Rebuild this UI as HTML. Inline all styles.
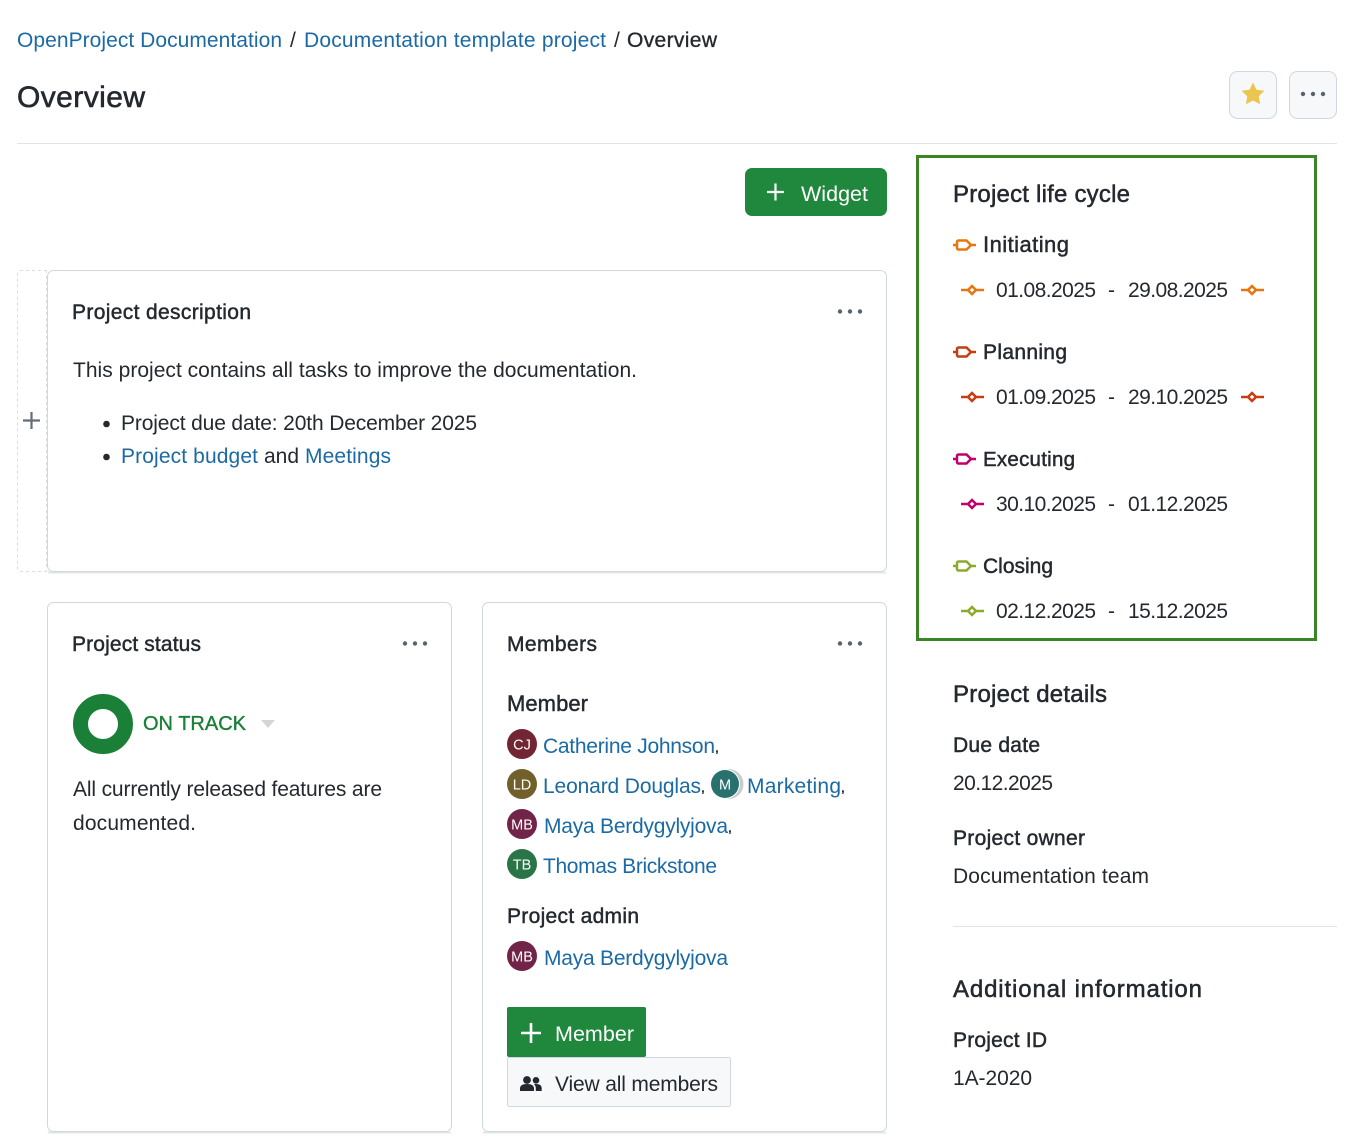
<!DOCTYPE html>
<html><head><meta charset="utf-8"><title>Overview</title>
<style>
html,body{margin:0;padding:0;background:#fff}
svg{display:block}
text{font-family:"Liberation Sans",sans-serif;font-size:21px;fill:#24292f;white-space:pre}
.l{fill:#1b6aa5}
.b{stroke:#24292f;stroke-width:.45px}
.h{font-size:24px;stroke:#24292f;stroke-width:.5px}
.w{fill:#fff;font-size:21.5px}
.av{font-size:14.5px;fill:#fff;text-anchor:middle}
.ic{fill:none;stroke-width:2.5}
.c{font-size:14px;stroke:#24292f;stroke-width:.4px}
</style></head><body>
<svg width="1351" height="1138" viewBox="0 0 1351 1138" xmlns="http://www.w3.org/2000/svg">
<rect width="1351" height="1138" fill="#fff"/>
<!-- breadcrumb -->
<text class="l" x="17" y="47" textLength="265">OpenProject Documentation</text>
<text x="290" y="47">/</text>
<text class="l" x="304" y="47" textLength="302">Documentation template project</text>
<text x="614" y="47">/</text>
<text x="627" y="47" textLength="90" style="stroke:#24292f;stroke-width:.35px">Overview</text>
<text x="17" y="107" textLength="128" style="font-size:30px;stroke:#24292f;stroke-width:.6px">Overview</text>
<!-- header buttons -->
<rect x="1229.500" y="71.500" width="47" height="47" rx="8" fill="#f6f8fa" stroke="#d0d7de"/>
<path d="M1253 82.500l3.500 7.200 7.900 1.100-5.700 5.500 1.400 7.900-7.100-3.700-7.100 3.700 1.400-7.900-5.700-5.500 7.900-1.100z" fill="#eac54f"/>
<rect x="1289.500" y="71.500" width="47" height="47" rx="8" fill="#f6f8fa" stroke="#d0d7de"/>
<g fill="#59636e"><circle cx="1303" cy="94" r="2.200"/><circle cx="1313" cy="94" r="2.200"/><circle cx="1323" cy="94" r="2.200"/></g>
<line x1="17" y1="143.500" x2="1337" y2="143.500" stroke="#e1e5e9"/>
<!-- widget button -->
<rect x="745" y="168" width="142" height="48" rx="7" fill="#1f883d"/>
<path d="M775.500 183.500v17M767 192h17" stroke="#fff" stroke-width="2.200"/>
<text class="w" x="801" y="201" textLength="67">Widget</text>
<!-- dashed sidebar -->
<path d="M47 270.500H21a3.500 3.500 0 0 0-3.500 3.500v294a3.500 3.500 0 0 0 3.500 3.500h26M46.500 270v302" fill="none" stroke="#d8dde2" stroke-dasharray="3 3"/>
<path d="M31.500 412v17M23 420.500h17" stroke="#646d78" stroke-width="2.200"/>
<!-- cards -->
<path d="M48 572.500h838M48 1132.500h403M483 1132.500h403" stroke="#e3e6e9" stroke-width="2"/>
<rect x="47.500" y="270.500" width="839" height="301" rx="6" fill="#fff" stroke="#d0d7de"/>
<rect x="47.500" y="602.500" width="404" height="529" rx="6" fill="#fff" stroke="#d0d7de"/>
<rect x="482.500" y="602.500" width="404" height="529" rx="6" fill="#fff" stroke="#d0d7de"/>
<!-- description -->
<text class="b" x="72" y="319" textLength="179">Project description</text>
<g fill="#59636e"><circle cx="840" cy="311.500" r="2.200"/><circle cx="850" cy="311.500" r="2.200"/><circle cx="860" cy="311.500" r="2.200"/></g>
<text x="73" y="377" textLength="564">This project contains all tasks to improve the documentation.</text>
<circle cx="106.500" cy="424" r="3.300" fill="#24292f"/>
<circle cx="106.500" cy="457" r="3.300" fill="#24292f"/>
<text x="121" y="430" textLength="356">Project due date: 20th December 2025</text>
<text class="l" x="121" y="463" textLength="137">Project budget</text>
<text x="264" y="463" textLength="35">and</text>
<text class="l" x="305" y="463" textLength="86">Meetings</text>
<!-- status -->
<text class="b" x="72" y="651" textLength="129">Project status</text>
<g fill="#59636e"><circle cx="405" cy="643.500" r="2.200"/><circle cx="415" cy="643.500" r="2.200"/><circle cx="425" cy="643.500" r="2.200"/></g>
<circle cx="103" cy="724" r="22.500" fill="none" stroke="#1a7f37" stroke-width="15"/>
<text x="143" y="730" textLength="103" style="font-size:20px;fill:#1a7f37;stroke:#1a7f37;stroke-width:.35px">ON TRACK</text>
<path d="M261 720h14l-7 8z" fill="#d4d5d8"/>
<text x="73" y="796" textLength="309">All currently released features are</text>
<text x="73" y="830" textLength="123">documented.</text>
<!-- members -->
<text class="b" x="507" y="651" textLength="90">Members</text>
<g fill="#59636e"><circle cx="840" cy="643.500" r="2.200"/><circle cx="850" cy="643.500" r="2.200"/><circle cx="860" cy="643.500" r="2.200"/></g>
<text class="b" x="507" y="711" textLength="81" style="font-size:22px">Member</text>
<circle cx="522" cy="744" r="15" fill="#722533"/><text class="av" x="522" y="749.500">CJ</text>
<text class="l" x="543" y="753" textLength="172">Catherine Johnson</text><text class="c" x="715" y="752">,</text>
<circle cx="522" cy="784" r="15" fill="#71602a"/><text class="av" x="522" y="789.500">LD</text>
<text class="l" x="543" y="793" textLength="158">Leonard Douglas</text><text class="c" x="701" y="792">,</text>
<circle cx="728.500" cy="784" r="15" fill="#c9cbcc"/><circle cx="725" cy="784" r="15" fill="#fff"/><circle cx="725" cy="784" r="14" fill="#29716f"/><text class="av" x="725" y="789.500">M</text>
<text class="l" x="747" y="793" textLength="94">Marketing</text><text class="c" x="841" y="792">,</text>
<circle cx="522" cy="824" r="15" fill="#722448"/><text class="av" x="522" y="829.500">MB</text>
<text class="l" x="544" y="833" textLength="184">Maya Berdygylyjova</text><text class="c" x="728" y="832">,</text>
<circle cx="522" cy="864" r="15" fill="#2a7548"/><text class="av" x="522" y="869.500">TB</text>
<text class="l" x="543" y="873" textLength="174">Thomas Brickstone</text>
<text class="b" x="507" y="923" textLength="132">Project admin</text>
<circle cx="522" cy="956" r="15" fill="#722448"/><text class="av" x="522" y="961.500">MB</text>
<text class="l" x="544" y="965" textLength="184">Maya Berdygylyjova</text>
<rect x="507" y="1007" width="139" height="50" rx="2" fill="#1f883d"/>
<path d="M531 1023v20M521 1033h20" stroke="#fff" stroke-width="2.600"/>
<text class="w" x="555" y="1041" textLength="79">Member</text>
<rect x="507.500" y="1057.500" width="223" height="49" rx="2" fill="#f6f8fa" stroke="#d0d7de"/>
<circle cx="527" cy="1080" r="3.900" fill="#24292f"/>
<circle cx="536" cy="1080.300" r="3.300" fill="#24292f"/>
<path d="M520 1091v-2.500c0-3 2.500-4.500 7-4.500s7 1.500 7 4.500v2.500z" fill="#24292f"/>
<path d="M535.800 1091v-2.800c0-1.800-.7-3.200-2-4.100 .7-.1 1.400-.1 2.200-.1 3.600 0 5.700 1.400 5.700 4.200v2.800z" fill="#24292f"/>
<text x="555" y="1091" textLength="163">View all members</text>
<!-- life cycle -->
<rect x="917.500" y="156.500" width="398" height="483" fill="none" stroke="#3b8526" stroke-width="3"/>
<text class="h" x="953" y="202" textLength="177">Project life cycle</text>

<g stroke="#e8760f" class="ic"><path d="M953 245h4M971 245h5M958.500 240.500h8l4.500 4.500-4.500 4.500h-8a1.500 1.500 0 0 1-1.500-1.500v-6a1.500 1.500 0 0 1 1.500-1.500z"/><path d="M961 290h7M976 290h8M972 286l4 4-4 4-4-4z"/><path d="M1241 290h7M1256 290h8M1252 286l4 4-4 4-4-4z"/></g>
<text class="b" x="983" y="252" textLength="86" style="font-size:22px">Initiating</text>
<text x="996" y="297" textLength="100">01.08.2025</text><text x="1108" y="297">-</text><text x="1128" y="297" textLength="100">29.08.2025</text>

<g stroke="#c93c10" class="ic"><path d="M953 352h4M971 352h5M958.500 347.500h8l4.500 4.500-4.500 4.500h-8a1.500 1.500 0 0 1-1.500-1.500v-6a1.500 1.500 0 0 1 1.500-1.500z"/><path d="M961 397h7M976 397h8M972 393l4 4-4 4-4-4z"/><path d="M1241 397h7M1256 397h8M1252 393l4 4-4 4-4-4z"/></g>
<text class="b" x="983" y="359" textLength="84">Planning</text>
<text x="996" y="404" textLength="100">01.09.2025</text><text x="1108" y="404">-</text><text x="1128" y="404" textLength="100">29.10.2025</text>

<g stroke="#c1006b" class="ic"><path d="M953 459h4M971 459h5M958.500 454.500h8l4.500 4.500-4.500 4.500h-8a1.500 1.500 0 0 1-1.500-1.500v-6a1.500 1.500 0 0 1 1.500-1.500z"/><path d="M961 504h7M976 504h8M972 500l4 4-4 4-4-4z"/></g>
<text class="b" x="983" y="466" textLength="92" style="font-size:20.500px">Executing</text>
<text x="996" y="511" textLength="100">30.10.2025</text><text x="1108" y="511">-</text><text x="1128" y="511" textLength="100">01.12.2025</text>

<g stroke="#8bab2c" class="ic"><path d="M953 566h4M971 566h5M958.500 561.500h8l4.500 4.500-4.500 4.500h-8a1.500 1.500 0 0 1-1.500-1.500v-6a1.500 1.500 0 0 1 1.500-1.500z"/><path d="M961 611h7M976 611h8M972 607l4 4-4 4-4-4z"/></g>
<text class="b" x="983" y="573" textLength="70">Closing</text>
<text x="996" y="618" textLength="100">02.12.2025</text><text x="1108" y="618">-</text><text x="1128" y="618" textLength="100">15.12.2025</text>
<!-- details -->
<text class="h" x="953" y="702" textLength="154">Project details</text>
<text class="b" x="953" y="752" textLength="87">Due date</text>
<text x="953" y="790" textLength="100">20.12.2025</text>
<text class="b" x="953" y="845" textLength="132">Project owner</text>
<text x="953" y="883" textLength="196">Documentation team</text>
<line x1="953" y1="926.500" x2="1337" y2="926.500" stroke="#e1e5e9"/>
<text class="h" x="953" y="997" textLength="249">Additional information</text>
<text class="b" x="953" y="1047" textLength="94">Project ID</text>
<text x="953" y="1085" textLength="79">1A-2020</text>
</svg>
</body></html>
